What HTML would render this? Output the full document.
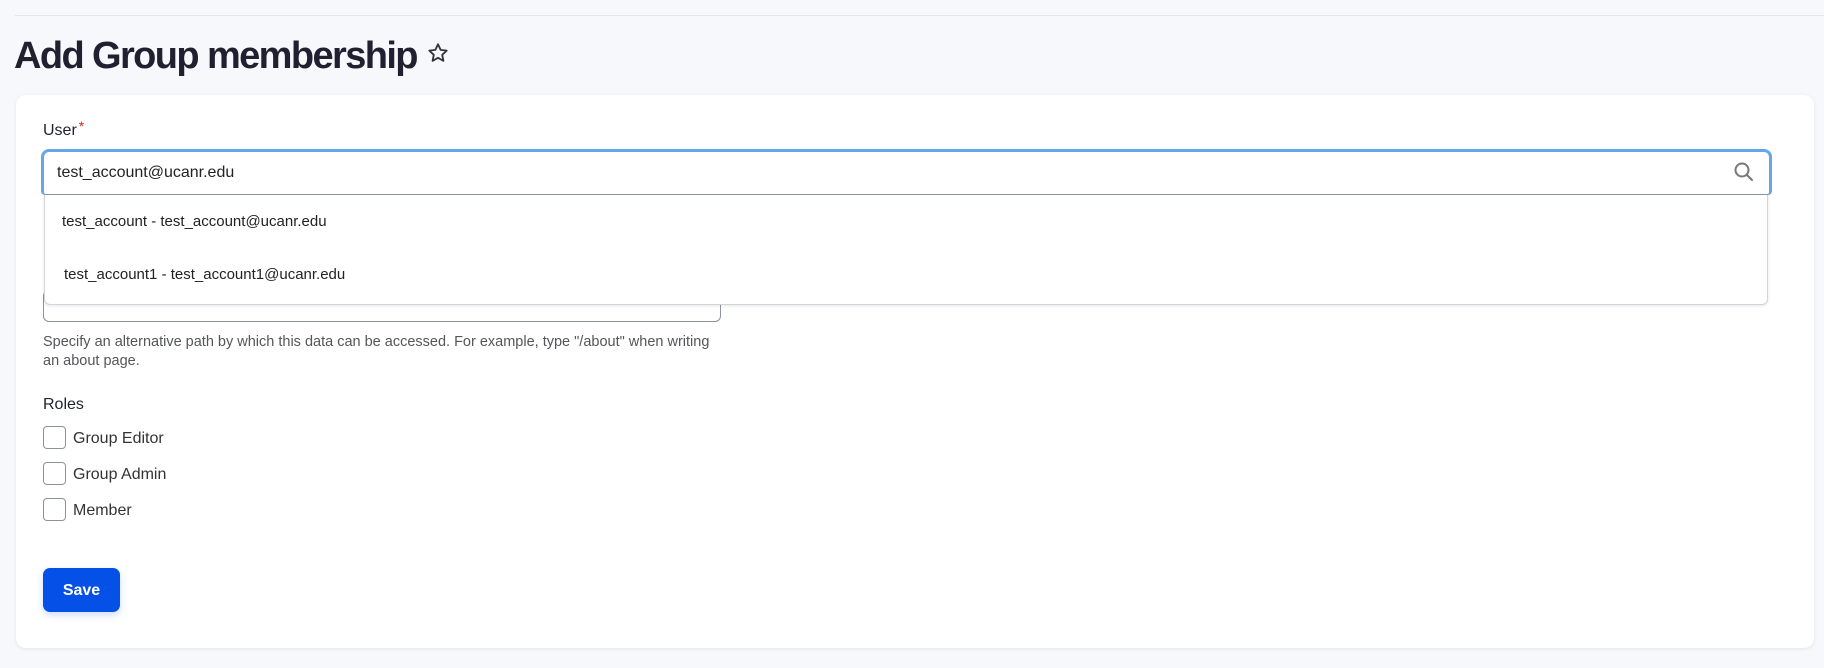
<!DOCTYPE html>
<html><head><meta charset="utf-8"><style>
*{box-sizing:border-box;margin:0;padding:0}
body{width:1824px;height:668px;background:#f7f8fc;font-family:"Liberation Sans",sans-serif;position:relative;overflow:hidden;color:#222330}
.a{position:absolute}
</style></head><body>
<div class="a" style="left:15px;right:0;top:15px;height:1px;background:#e3e5ec"></div>
<div class="a" style="left:14px;top:31px;font-size:38px;font-weight:bold;letter-spacing:-1.6px;color:#1f2130;line-height:50px">Add Group membership</div>
<svg class="a" style="left:427px;top:42px" width="22" height="22" viewBox="0 0 24 24"><path d="M12 2.5l2.9 6.1 6.6.8-4.9 4.6 1.3 6.6L12 17.3l-5.9 3.3 1.3-6.6-4.9-4.6 6.6-.8z" fill="none" stroke="#333" stroke-width="2" stroke-linejoin="round"/></svg>
<div class="a" style="left:16px;top:95px;width:1798px;height:553px;background:#fff;border-radius:10px;box-shadow:0 1px 4px rgba(0,0,0,.08)"></div>
<div class="a" style="left:43px;top:122px;font-size:16px;color:#222330">User<span style="color:#d72222;position:relative;top:-4px;font-size:14px;margin-left:2px">*</span></div>
<div class="a" style="left:43px;top:290px;width:678px;height:32px;border:1px solid #8e929c;border-radius:6px;background:#fff"></div>
<div class="a" style="left:43px;top:333px;width:680px;font-size:14.5px;line-height:19px;color:#55565b">Specify an alternative path by which this data can be accessed. For example, type "/about" when writing an about page.</div>
<div class="a" style="left:43px;top:396px;font-size:16px">Roles</div>
<div class="a" style="left:43px;top:426px;width:23px;height:23px;border:1px solid #8e929c;border-radius:4px"></div>
<div class="a" style="left:73px;top:430px;font-size:16px;color:#333">Group Editor</div>
<div class="a" style="left:43px;top:462px;width:23px;height:23px;border:1px solid #8e929c;border-radius:4px"></div>
<div class="a" style="left:73px;top:466px;font-size:16px;color:#333">Group Admin</div>
<div class="a" style="left:43px;top:498px;width:23px;height:23px;border:1px solid #8e929c;border-radius:4px"></div>
<div class="a" style="left:73px;top:502px;font-size:16px;color:#333">Member</div>
<div class="a" style="left:43px;top:568px;width:77px;height:44px;background:#0550e6;border-radius:7px;color:#fff;font-weight:bold;font-size:16px;line-height:45px;text-align:center;box-shadow:0 3px 8px rgba(5,80,230,.2)">Save</div>
<div class="a" style="left:44px;top:194px;width:1724px;height:111px;background:#fff;border:1px solid #d2d4da;border-top:none;border-radius:0 0 6px 6px;box-shadow:0 1px 3px rgba(0,0,0,.1)"></div>
<div class="a" style="left:62px;top:213px;font-size:15px;color:#222">test_account - test_account@ucanr.edu</div>
<div class="a" style="left:64px;top:266px;font-size:15px;color:#222">test_account1 - test_account1@ucanr.edu</div>
<div class="a" style="left:41px;top:149px;width:1731px;height:46px;border:3px solid #64a6ea;border-bottom:1px solid #8e929c;border-radius:8px 8px 4px 4px;background:#fff"></div>
<div class="a" style="left:57px;top:164px;font-size:16px;color:#222">test_account@ucanr.edu</div>
<svg class="a" style="left:1733px;top:161px" width="22" height="22" viewBox="0 0 22 22"><circle cx="9" cy="9" r="6.5" fill="none" stroke="#777" stroke-width="2"/><path d="M14 14l5 5" stroke="#777" stroke-width="2" stroke-linecap="round"/></svg>
</body></html>
